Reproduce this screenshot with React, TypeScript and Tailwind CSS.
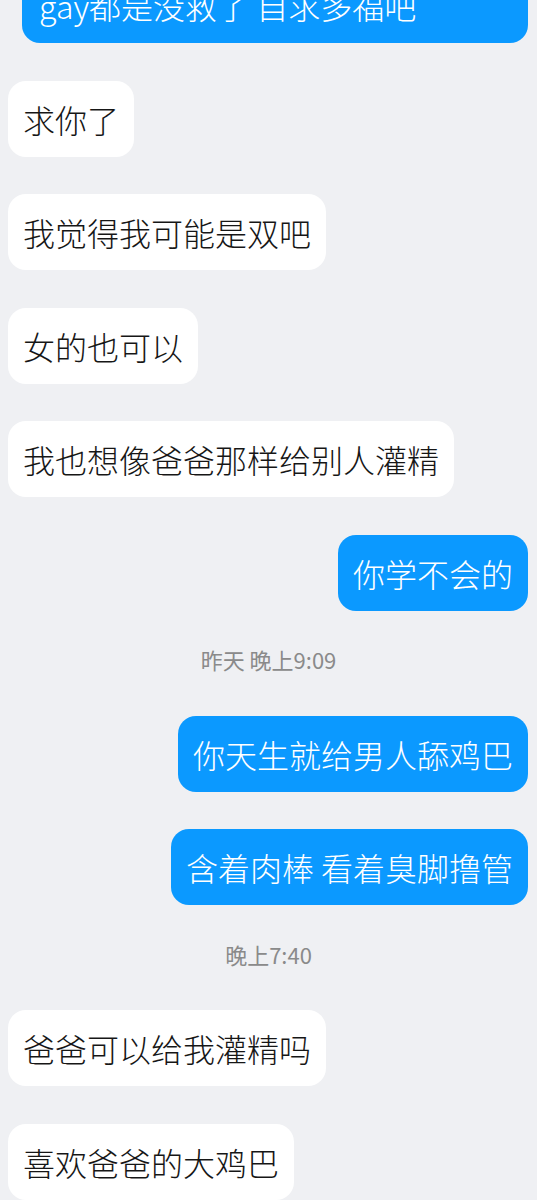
const font = { fontFamily: '"Noto Sans CJK SC", "Noto Sans", sans-serif' }

type Msg =
  | { kind: 'in' | 'out'; text: string }
  | { kind: 'time'; text: string }

const messages: Msg[] = [
  { kind: 'in', text: '求你了' },
  { kind: 'in', text: '我觉得我可能是双吧' },
  { kind: 'in', text: '女的也可以' },
  { kind: 'in', text: '我也想像爸爸那样给别人灌精' },
  { kind: 'out', text: '你学不会的' },
  { kind: 'time', text: '昨天 晚上9:09' },
  { kind: 'out', text: '你天生就给男人舔鸡巴' },
  { kind: 'out', text: '含着肉棒 看着臭脚撸管' },
  { kind: 'time', text: '晚上7:40' },
  { kind: 'in', text: '爸爸可以给我灌精吗' },
  { kind: 'in', text: '喜欢爸爸的大鸡巴' },
]

function Bubble({ kind, text }: { kind: 'in' | 'out'; text: string }) {
  const mine = kind === 'out'
  return (
    <div className={`flex ${mine ? 'justify-end pr-[9px]' : 'justify-start pl-[8px]'}`}>
      <div
        className={`rounded-[18px] px-[15px] py-[16px] text-[32px] font-light leading-[44px] whitespace-pre ${
          mine ? 'bg-[#0b99ff] text-white' : 'bg-white text-[#161616]'
        }`}
      >
        {text}
      </div>
    </div>
  )
}

export default function App() {
  return (
    <div className="w-[537px] h-[1200px] overflow-hidden bg-[#eff0f3]" style={font}>
      <div className="flex flex-col">
        {/* last message of the previous screen, cut off at the top */}
        <div className="flex justify-end pr-[9px] -mt-[33px]">
          <div className="w-[506px] rounded-[18px] bg-[#0b99ff] px-[17px] py-[16px] text-[32px] font-light leading-[44px] text-white">
            gay都是没救了 自求多福吧
          </div>
        </div>

        {messages.map((m, i) =>
          m.kind === 'time' ? (
            <div
              key={i}
              className="mt-[34px] mb-[3.5px] h-[30px] flex items-center justify-center text-[22px] text-[#8a8a8a]"
            >
              {m.text}
            </div>
          ) : (
            <div key={i} className="mt-[37.5px]">
              <Bubble kind={m.kind} text={m.text} />
            </div>
          ),
        )}
      </div>
    </div>
  )
}
